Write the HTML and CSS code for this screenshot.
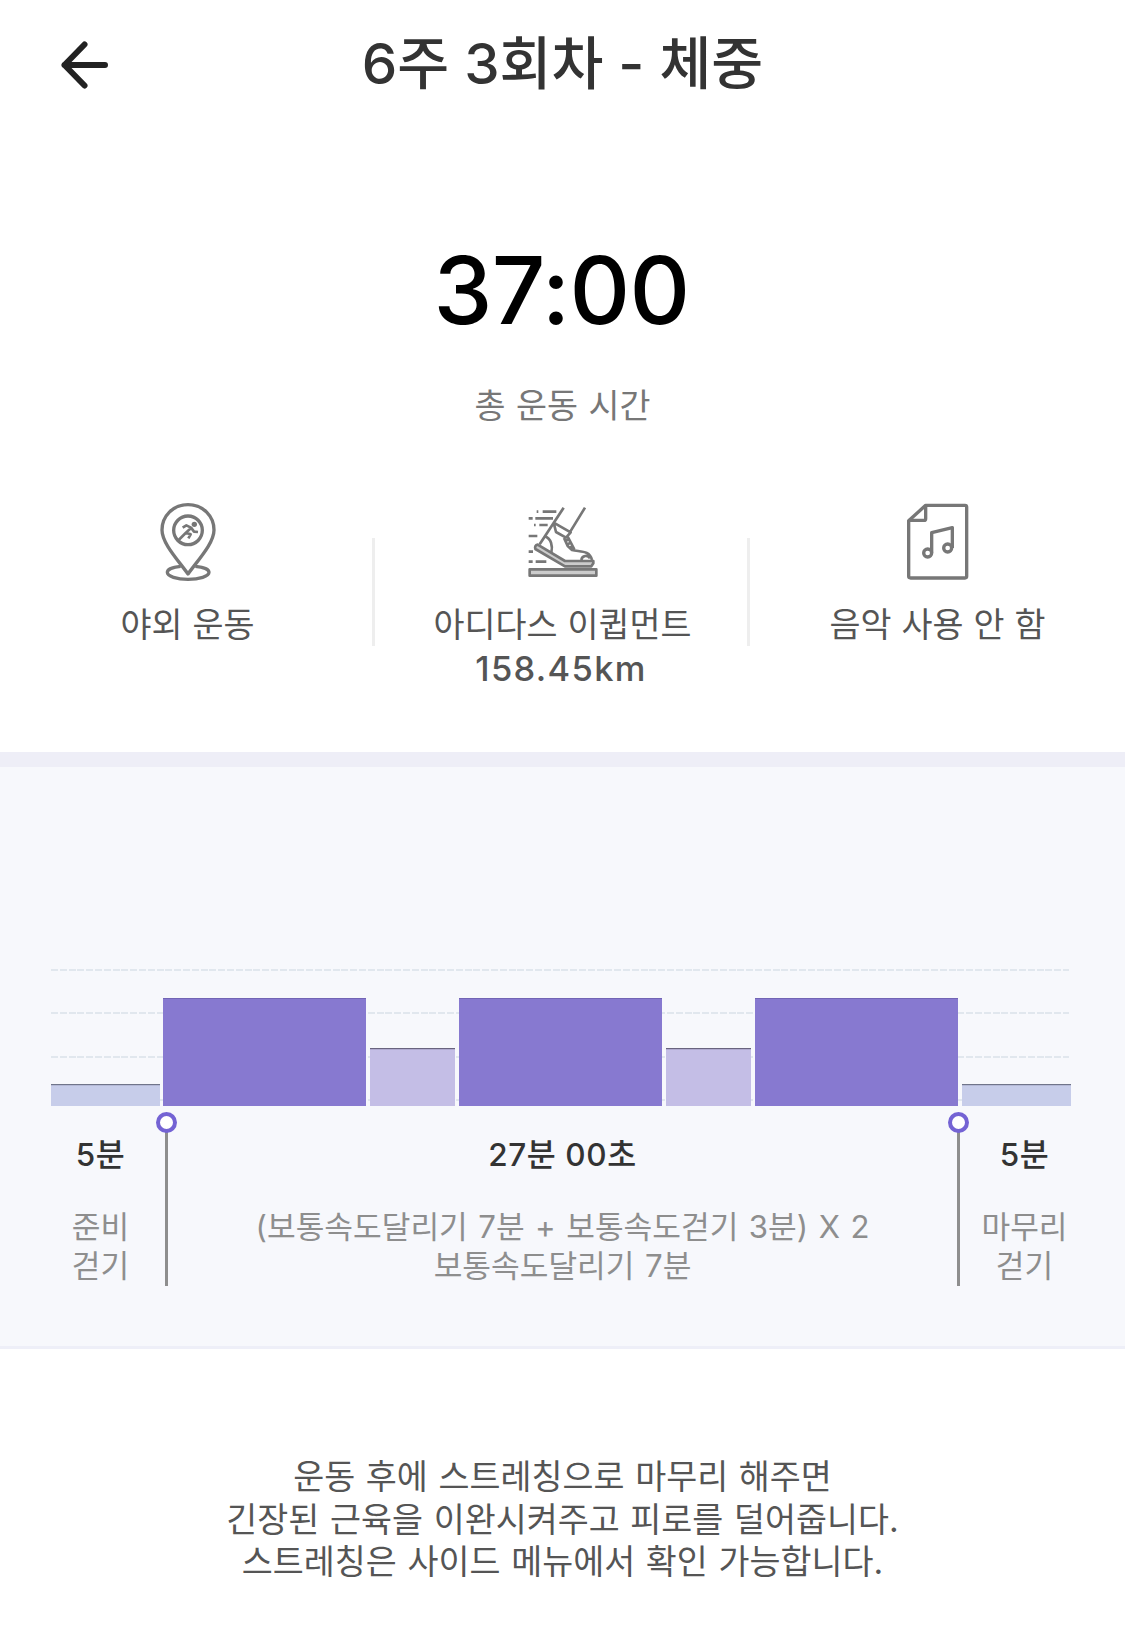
FILE: index.html
```html
<!DOCTYPE html>
<html lang="ko">
<head>
    <meta charset="UTF-8">
    <meta name="viewport" content="width=device-width, initial-scale=1.0">
    <title>6주 3회차 - 체중</title>
    <link rel="stylesheet" href="styles.css">
</head>
<body>
    <header class="header">
        <svg class="back" viewBox="0 0 60 60">
            <path d="M49 30H8.500M28.500 9.500L8.500 30L28.500 50.500"/>
        </svg>
        <h1>6주 3회차 - 체중</h1>
    </header>

    <!-- 총 운동 시간 -->
    <section class="total">
        <div class="total-time">37:00</div>
        <div class="total-label">총 운동 시간</div>
    </section>

    <!-- 운동 정보 -->
    <section class="info">
        <div class="info-item">
            <svg class="icon" width="60" height="85" viewBox="0 0 180 255">
                <path d="M90 14C45 14 12 48 12 90C12 130 60 180 90 222C120 180 168 130 168 90C168 48 135 14 90 14Z"/>
                <circle cx="90" cy="91" r="43"/>
                <path d="M68 199C45 201 28 208 28 217C28 229 56 238 90 238C124 238 153 229 153 217C153 208 136 201 112 199"/>
                <circle class="solid" cx="109" cy="73" r="8"/>
                <path class="thin" d="M74 83L85 76L99 83L108 95L120 96M99 84L83 99L62 120M84 98L98 103L91 115"/>
            </svg>
            <p>야외 운동</p>
        </div>
        <div class="info-item">
            <svg class="icon" width="80" height="85" viewBox="0 0 240 255">
                <path class="thin" d="M122 23L50 133M186 23L140 98M92 68L143 97L129 113L99 96L92 68"/>
                <path class="thin" d="M66 109C84 116 90 137 85 158"/>
                <path class="thin" d="M123 114L134 138L147 150C172 156 200 150 207 180M134 110L154 148M125 124L138 118M130 134L143 128M137 145L150 138"/>
                <path class="thin" d="M175 180C177 166 195 164 201 175"/>
                <path class="sole" d="M44 134L126 183H211V190L205 199H126L37 147Q34 136 44 134Z"/>
                <rect class="sole" x="20" y="208" width="200" height="19"/>
                <path class="thin" d="M41 35H46M59 35H100M17 55H29M37 55H90M33 75H38M49 75H74M17 108H43M17 155H30M17 185H29M38 185H70"/>
            </svg>
            <p>아디다스 이큅먼트<br><span class="km">158.45km</span></p>
        </div>
        <div class="info-item">
            <svg class="icon" width="70" height="85" viewBox="0 0 210 255">
                <path d="M68 16H186Q191 16 191 21V229Q191 234 186 234H23Q17 234 17 229V62Z"/>
                <path d="M68 16V56Q68 61 63 61H17"/>
                <path d="M86 158V98L148 83V144"/>
                <circle cx="74" cy="159" r="12"/>
                <circle cx="134" cy="144" r="12"/>
            </svg>
            <p>음악 사용 안 함</p>
        </div>
    </section>

    <!-- 운동 구간 그래프 -->
    <section class="plan">
        <div class="chart">
            <div class="grid">
                <i></i><i></i><i></i><i></i>
            </div>
            <div class="bar walk"></div>
            <div class="bar run"></div>
            <div class="bar rest"></div>
            <div class="bar run"></div>
            <div class="bar rest"></div>
            <div class="bar run"></div>
            <div class="bar walk"></div>
        </div>
        <div class="steps">
            <div class="step">
                <h2>5분</h2>
                <p>준비<br>걷기</p>
            </div>
            <div class="step main">
                <h2>27분 00초</h2>
                <p>(보통속도달리기 7분 + 보통속도걷기 3분) X 2<br>보통속도달리기 7분</p>
            </div>
            <div class="step">
                <h2>5분</h2>
                <p>마무리<br>걷기</p>
            </div>
        </div>
    </section>

    <p class="notice">운동 후에 스트레칭으로 마무리 해주면<br>긴장된 근육을 이완시켜주고 피로를 덜어줍니다.<br>스트레칭은 사이드 메뉴에서 확인 가능합니다.</p>
</body>
</html>
```
FILE: styles.css
```css
*,
*::before,
*::after {
    box-sizing: border-box;
}
body {
    margin: 0;
    font-family: Inter, "Noto Sans CJK KR", sans-serif;
    background-color: #fff;
    color: #555;
    text-align: center;
}
h1, h2, p {
    margin: 0;
}
.header {
    display: grid;
    grid-template-columns: 150px 1fr 150px;
    align-items: center;
    height: 130px;
}
.header h1 {
    margin-bottom: 3px;
    font-size: 56.4px;
    line-height: 80px;
    font-weight: 500;
    color: #333;
    white-space: nowrap;
}
.back {
    width: 60px;
    height: 60px;
    margin-left: 56px;
    fill: none;
    stroke: #222;
    stroke-width: 6;
    stroke-linecap: round;
    stroke-linejoin: round;
}
.total {
    height: 370px;
    padding-top: 110px;
}
.total-time {
    font-size: 94px;
    line-height: 100px;
    font-weight: 500;
    letter-spacing: -0.7px;
    margin-right: 2px;
    color: #000;
}
.total-label {
    margin-top: 42px;
    font-size: 33.7px;
    line-height: 48px;
    word-spacing: 1px;
    color: #777;
}
.info {
    display: flex;
    height: 252px;
}
.info-item {
    position: relative;
    flex: 1;
    font-size: 33.7px;
    line-height: 44px;
}
.info-item + .info-item::before {
    content: "";
    position: absolute;
    left: -3px;
    top: 38px;
    width: 3px;
    height: 108px;
    background-color: #eee;
}
.info-item p {
    margin-top: 18px;
    word-spacing: 0.5px;
}
.km {
    margin-right: 3px;
    font-size: 34.5px;
    font-weight: 500;
    letter-spacing: 1.3px;
}
.icon {
    display: block;
    margin: 0 auto;
    fill: none;
    stroke: #777;
    stroke-width: 10;
    stroke-linejoin: round;
}
.icon .thin {
    stroke-width: 8;
}
.icon .solid {
    fill: #777;
    stroke: none;
}
.icon .sole {
    fill: #ccc;
    stroke-width: 8;
}
.plan {
    height: 597px;
    border-top: 15px solid #eeeef7;
    border-bottom: 3px solid #eeeff8;
    background-color: #f7f8fc;
    padding-top: 202px;
}
.chart {
    position: relative;
    display: flex;
    align-items: flex-end;
    gap: 4px;
    height: 137px;
    margin-left: 51px;
    width: 1020px;
}
.grid {
    position: absolute;
    inset: 0 2px 0 0;
    display: flex;
    flex-direction: column;
    gap: 41.3px;
}
.grid i {
    height: 2px;
    flex: none;
    background: repeating-linear-gradient(90deg, #e1e7ee 0 7px, transparent 7px 8.8px);
}
.bar {
    position: relative;
}
.walk {
    width: 109px;
    height: 22px;
    background-color: #c7cdea;
    border-top: 1px solid #70758a;
    box-shadow: inset 0 1px #b4b9d6;
}
.walk + .run {
    margin-left: -1px;
}
.run {
    width: 203px;
    height: 108px;
    background-color: #8779d0;
    border-top: 1px solid #7265b5;
}
.rest {
    width: 85px;
    height: 58px;
    background-color: #c4bee6;
    border-top: 1px solid #69647f;
    box-shadow: inset 0 1px #b0aad0;
}
.steps {
    display: grid;
    grid-template-columns: 132px 792px 132px;
    margin-left: 34.5px;
    height: 180px;
}
.step {
    position: relative;
    padding-top: 25px;
}
.step h2 {
    font-size: 31.5px;
    line-height: 48px;
    font-weight: 500;
    letter-spacing: 0.6px;
    color: #333;
}
.step p {
    margin-top: 29px;
    font-size: 31.2px;
    line-height: 39px;
    word-spacing: 1.7px;
    color: #8e8e8e;
}
/* 구간 경계선 */
.main::before,
.main::after,
.step:first-child::before,
.step:last-child::before {
    content: "";
    position: absolute;
}
.main::before,
.main::after {
    top: 20px;
    width: 3px;
    height: 160px;
    background-color: #8e8e8e;
}
.main::before {
    left: -1.5px;
}
.main::after {
    right: -1.5px;
}
.step:first-child::before,
.step:last-child::before {
    top: 6px;
    width: 21px;
    height: 21px;
    border: 4px solid #7463d4;
    border-radius: 50%;
    background-color: #fff;
    z-index: 1;
}
.step:first-child::before {
    right: -10.5px;
}
.step:last-child::before {
    left: -10.5px;
}
.notice {
    margin-top: 107px;
    font-size: 33.7px;
    line-height: 42.5px;
    word-spacing: 1.2px;
}
```
